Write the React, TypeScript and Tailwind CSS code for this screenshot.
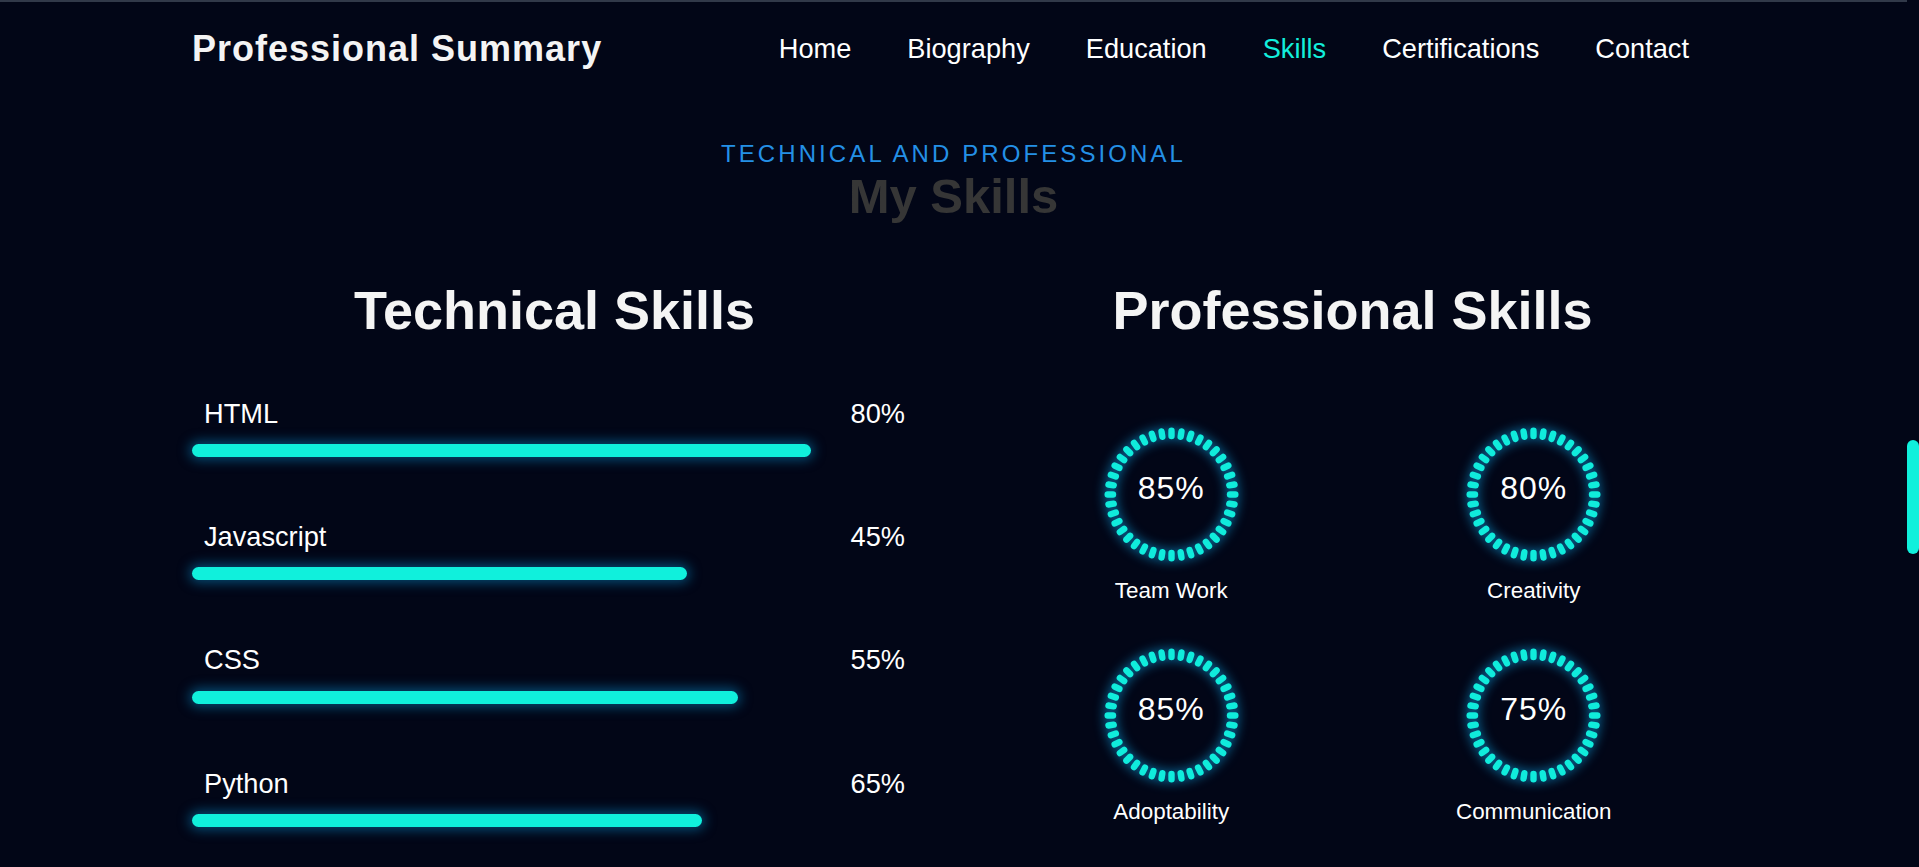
import React from 'react';

const navLinks = ['Home', 'Biography', 'Education', 'Skills', 'Certifications', 'Contact'];

const techSkills = [
  { name: 'HTML', value: '80%', width: 619 },
  { name: 'Javascript', value: '45%', width: 495 },
  { name: 'CSS', value: '55%', width: 546 },
  { name: 'Python', value: '65%', width: 510 },
];

const proSkills = [
  { name: 'Team Work', value: '85%' },
  { name: 'Creativity', value: '80%' },
  { name: 'Adoptability', value: '85%' },
  { name: 'Communication', value: '75%' },
];

// ring of small capsules around the percentage
function DotRing() {
  const dots = Array.from({ length: 40 }, (_, i) => (i * 360) / 40);
  return (
    <svg
      width="137"
      height="137"
      viewBox="0 0 137 137"
      className="drop-shadow-[0_0_6px_rgba(14,165,233,0.95)]"
    >
      {dots.map((deg) => {
        const rad = (deg * Math.PI) / 180;
        const x1 = 68.5 + Math.sin(rad) * 58.5;
        const y1 = 68.5 - Math.cos(rad) * 58.5;
        const x2 = 68.5 + Math.sin(rad) * 63.8;
        const y2 = 68.5 - Math.cos(rad) * 63.8;
        return (
          <line
            key={deg}
            x1={x1}
            y1={y1}
            x2={x2}
            y2={y2}
            stroke="#10ecdc"
            strokeWidth="6.4"
            strokeLinecap="round"
          />
        );
      })}
    </svg>
  );
}

export default function App() {
  return (
    <div className="h-screen overflow-hidden flex bg-[#020617] text-[#f2f2f2] font-['Liberation_Sans',Arial,sans-serif]">
      <div className="flex-1 border-t-2 border-[#313949]">
        {/* header */}
        <header className="w-[1523px] mx-auto h-[94px] flex items-center justify-between">
          <h1 className="text-[36px] font-bold leading-none tracking-[1px] text-[#f4f4f4]">
            Professional Summary
          </h1>
          <nav className="flex gap-[56px] pr-[26px]">
            {navLinks.map((link) => (
              <a
                key={link}
                href="#"
                className={`text-[27.2px] leading-none ${
                  link === 'Skills' ? 'text-[#12eedc]' : 'text-white'
                }`}
              >
                {link}
              </a>
            ))}
          </nav>
        </header>

        {/* section title */}
        <div className="mt-[46px] text-center">
          <p className="text-[24px] leading-none tracking-[3.1px] text-[#2490e6]">
            TECHNICAL AND PROFESSIONAL
          </p>
          <h2 className="mt-[6px] text-[49px] leading-none font-bold text-[#363636]">
            My Skills
          </h2>
        </div>

        <div className="w-[1523px] mx-auto mt-[62px] grid grid-cols-2 gap-x-[73px]">
          {/* technical */}
          <div>
            <h3 className="text-[54px] leading-none font-bold text-center text-[#f4f4f4]">
              Technical Skills
            </h3>
            <div className="mt-[63px] flex flex-col gap-[66px]">
              {techSkills.map((s) => (
                <div key={s.name}>
                  <div className="flex justify-between px-[12px] text-[27.2px] leading-none text-white">
                    <span>{s.name}</span>
                    <span>{s.value}</span>
                  </div>
                  <div className="mt-[17px]">
                    <div
                      className="h-[13px] rounded-full bg-[#10f0dc] shadow-[0_0_12px_3px_rgba(6,120,175,0.6)]"
                      style={{ width: s.width }}
                    />
                  </div>
                </div>
              ))}
            </div>
          </div>

          {/* professional */}
          <div>
            <h3 className="text-[54px] leading-none font-bold text-center text-[#f4f4f4]">
              Professional Skills
            </h3>
            <div className="mt-[89px] grid grid-cols-2 gap-y-[45px]">
              {proSkills.map((s) => (
                <div key={s.name} className="flex flex-col items-center">
                  <div className="relative w-[137px] h-[137px]">
                    <DotRing />
                    <div className="absolute inset-0 flex items-center justify-center pb-[13px]">
                      <span className="text-[32px] leading-none tracking-[1px] text-white">
                        {s.value}
                      </span>
                    </div>
                  </div>
                  <span className="mt-[17px] text-[22.4px] leading-none text-white">{s.name}</span>
                </div>
              ))}
            </div>
          </div>
        </div>
      </div>

      {/* scrollbar */}
      <div className="w-[12px]">
        <div className="mt-[440px] h-[114px] rounded-full bg-[#10f0dc]" />
      </div>
    </div>
  );
}
